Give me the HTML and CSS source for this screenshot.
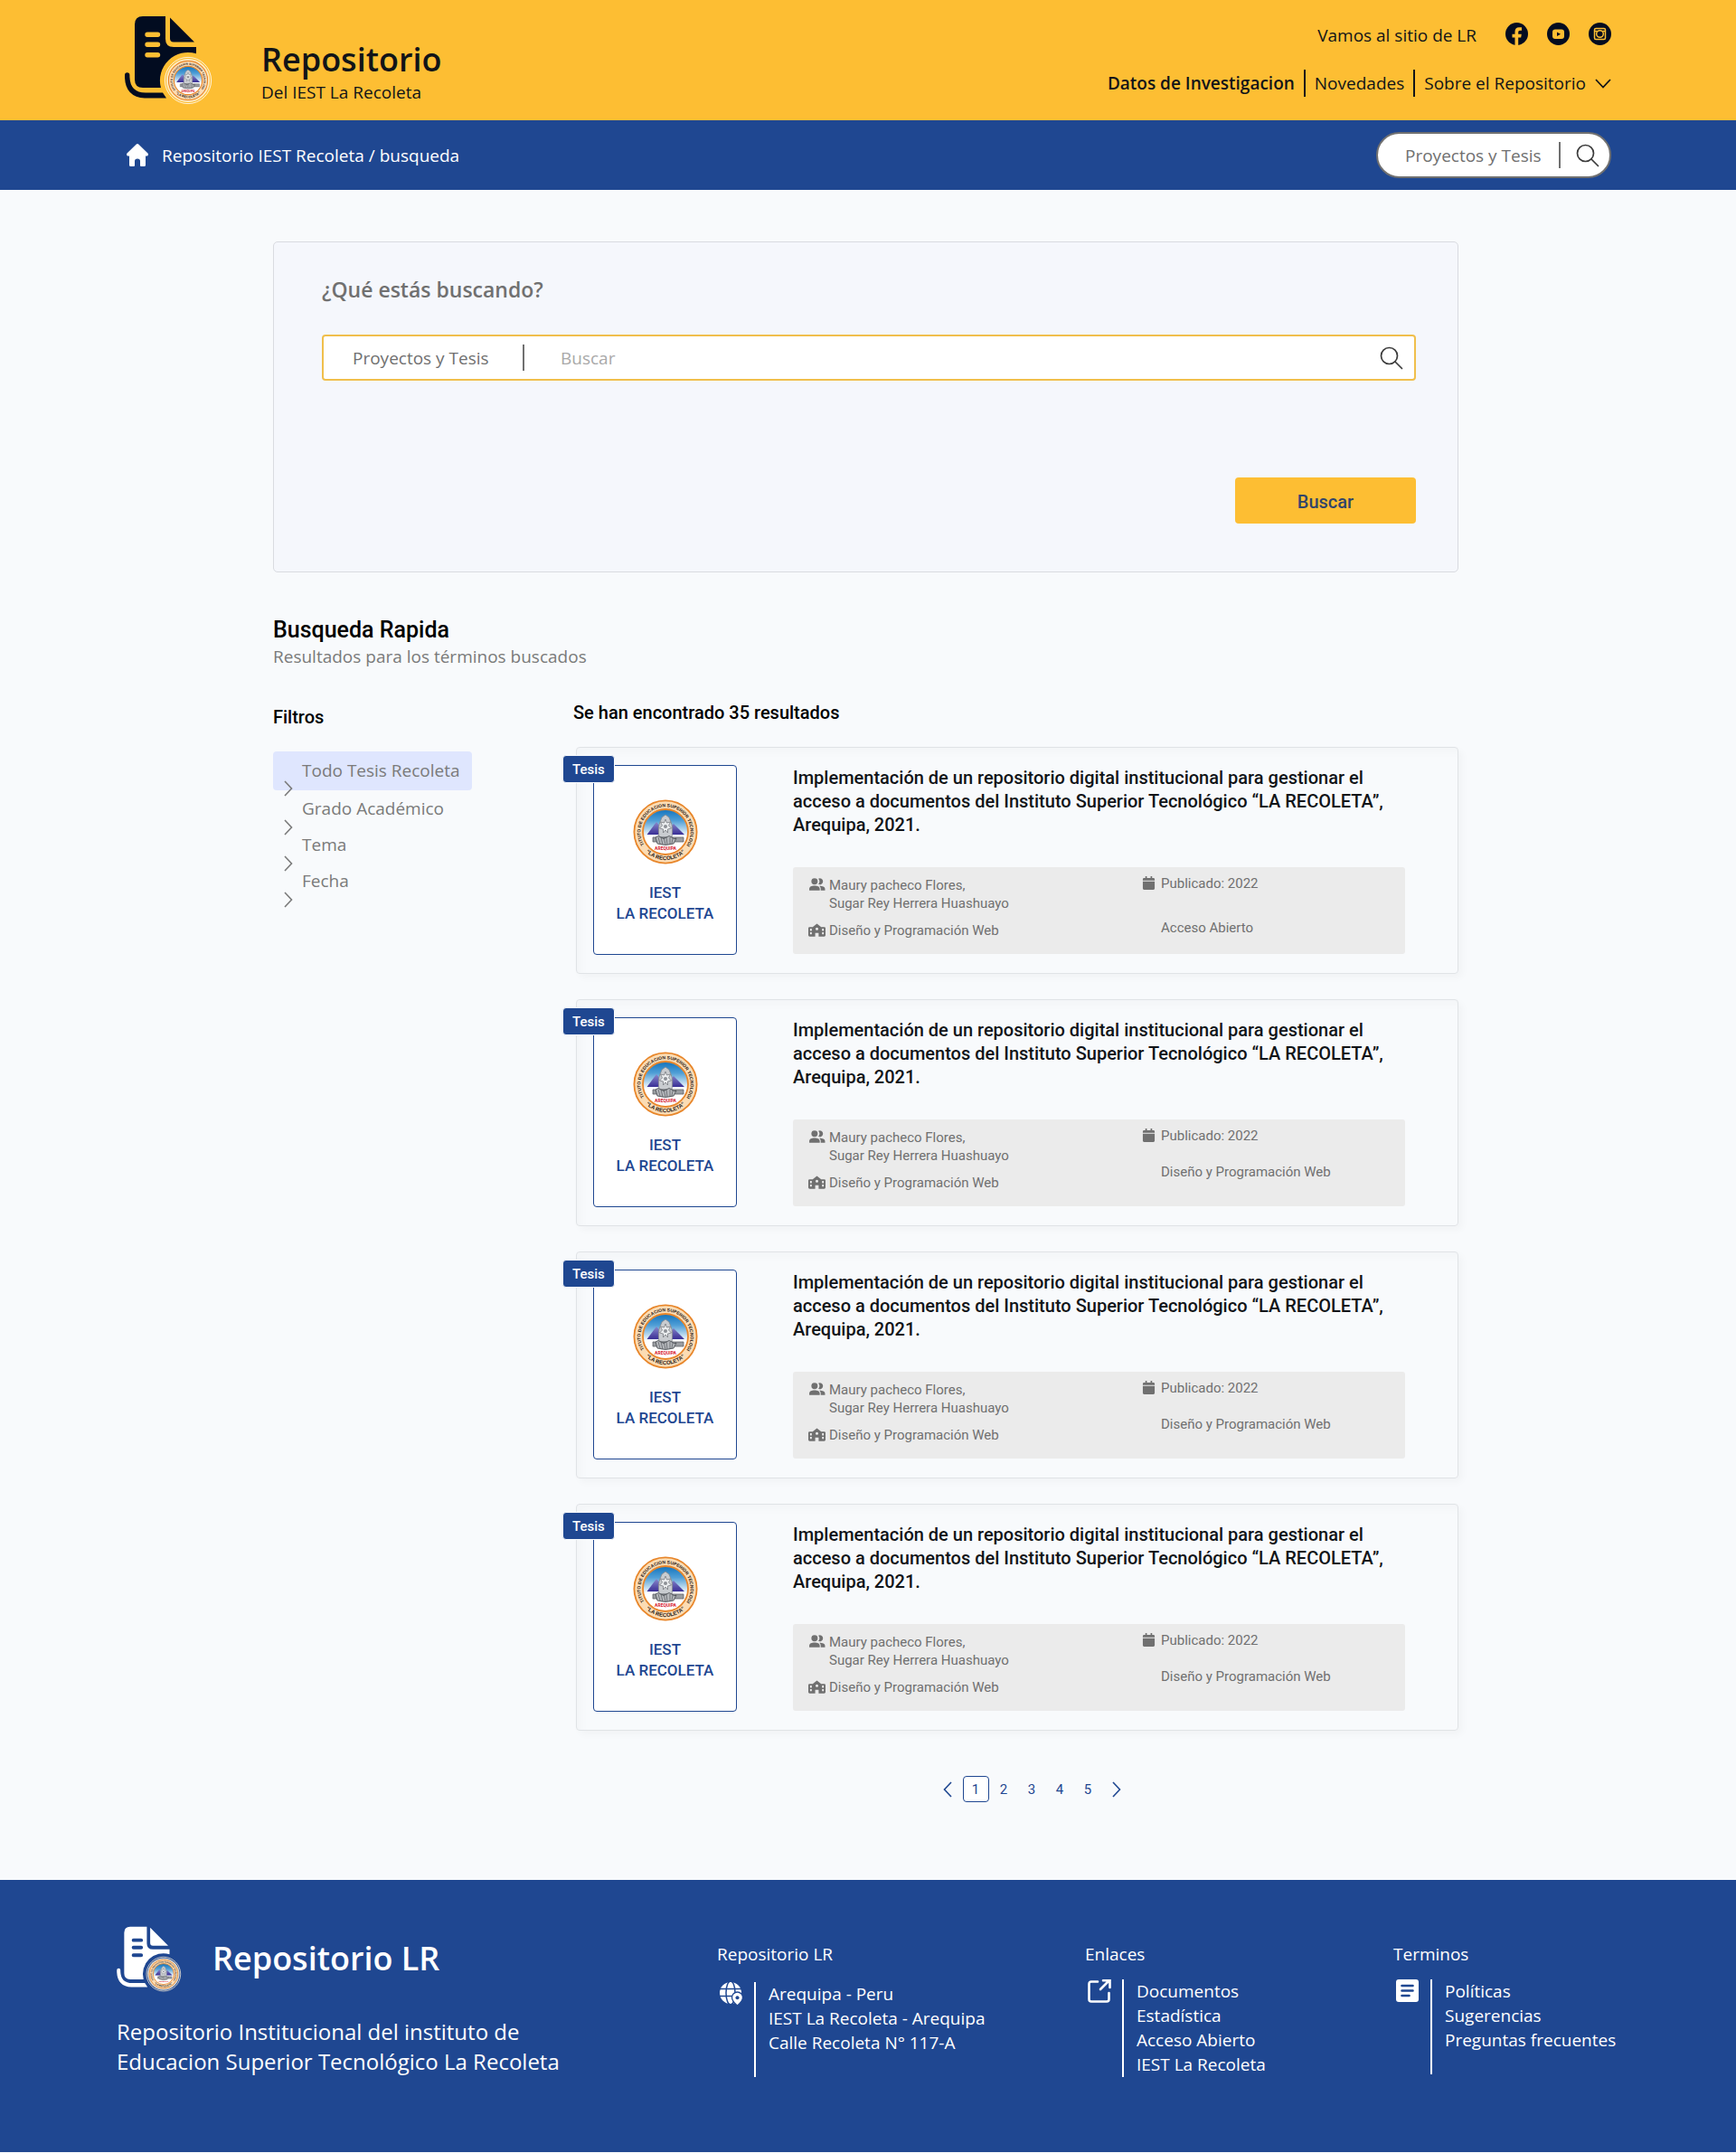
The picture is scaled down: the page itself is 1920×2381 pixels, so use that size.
FILE: index.html
```html
<!DOCTYPE html>
<html lang="es">
<head>
<meta charset="utf-8">
<meta name="viewport" content="width=device-width, initial-scale=1">
<title>Repositorio del IEST La Recoleta - búsqueda</title>
<link rel="stylesheet" href="styles.css">
</head>
<body>

<svg class="sprite" aria-hidden="true">
  <defs>
    <linearGradient id="sky" x1="0" y1="0" x2="0" y2="1">
      <stop offset="0" stop-color="#1273bd"/>
      <stop offset=".25" stop-color="#4f9ed6"/>
      <stop offset=".6" stop-color="#fff"/>
    </linearGradient>
    <linearGradient id="peak" x1="0" y1="0" x2="0" y2="1">
      <stop offset="0" stop-color="#8f8fd0"/>
      <stop offset="1" stop-color="#3a2f96"/>
    </linearGradient>
    <path id="arc-top" d="M13.2 51.5A27.6 27.6 0 1 1 58.8 51.5"/>
    <path id="arc-bottom" d="M13 57A31.4 31.4 0 0 0 59 57"/>
  </defs>
</svg>
<svg class="symbols" aria-hidden="true">
  <symbol id="seal" viewBox="0 0 72 72">
    <circle cx="36" cy="36" r="34.6" fill="#fbdcb4" stroke="#e8862a" stroke-width="1.8"/>
    <circle cx="36" cy="36" r="25" fill="url(#sky)" stroke="#e8862a" stroke-width="1.8"/>
    <path d="M15.500 39 26 25l5 6 5-7 5 7 4-4L57 39z" fill="url(#peak)"/>
    <path d="M29 42c-1-6-1-13 1-17l2-5 4-3 4 3 2 5c2 4 2 11 1 17z" fill="#c9ccd0" stroke="#83868b" stroke-width=".8"/>
    <path d="m36 22 1.500 4 4-1-2 4 3 3-4 1 0 4-2.500-3-2.500 3 0-4-4-1 3-3-2-4 4 1z" fill="#eceef0" stroke="#6d7076" stroke-width=".7"/>
    <circle cx="36" cy="30" r="2" fill="#8d9096"/>
    <path d="M22 42h34v5H22z" fill="#9a9da1" stroke="#55585d" stroke-width=".7"/>
    <path d="M25 42q3-3 6 0t6 0 6 0 5 1l-3 6q-9 3-18 0z" fill="#b5b8bc" stroke="#44474c" stroke-width=".8"/>
    <path d="m28 42 2 7m1-7 2 8m1-8 2 8m1-8 1 8m3-8 0 8m3-7-1 6" stroke="#55585d" stroke-width=".7" fill="none"/>
    <text x="36" y="56" class="seal-city">AREQUIPA</text>
    <text class="seal-ring"><textPath href="#arc-top" startOffset="50%">INSTITUTO DE EDUCACION SUPERIOR TECNOLOGICO</textPath></text>
    <text class="seal-ring seal-ring--name"><textPath href="#arc-bottom" startOffset="50%">“LA RECOLETA”</textPath></text>
  </symbol>
  <symbol id="logo" viewBox="0 0 97 99">
    <path fill="currentColor" fill-rule="evenodd" d="M20 1H45V26Q45 35 54 35H79V42.300A31 31 0 0 0 40 80H20Q11 80 11 71V10Q11 1 20 1ZM25 18.500a2.700 2.700 0 0 0 0 5.400H36.500a2.700 2.700 0 0 0 0-5.400ZM25 29.600a2.700 2.700 0 0 0 0 5.400H36.500a2.700 2.700 0 0 0 0-5.400ZM25 41a2.700 2.700 0 0 0 0 5.400H36.500a2.700 2.700 0 0 0 0-5.400Z"/>
    <path fill="currentColor" d="M50 2.500 77 29.500H54Q50 29.500 50 25.500ZM0 66a2.700 2.700 0 0 1 5.400 0V68Q6 85.500 23 85.500H42L46 91.500H22Q1 90.500 0 69Z"/>
    <circle cx="70" cy="72" r="25.600" fill="none" stroke="#fff3dc" stroke-width="1"/>
    <circle cx="70" cy="72" r="24" fill="#fff3dc" opacity=".85"/>
    <use href="#seal" x="47.500" y="49.500" width="45" height="45"/>
  </symbol>
  <symbol id="search" viewBox="0 0 26 26">
    <g fill="none" stroke="currentColor" stroke-width="1.700" stroke-linecap="round"><circle cx="10.500" cy="10.500" r="9"/><path d="m17 17 7.500 7.500"/></g>
  </symbol>
  <symbol id="next" viewBox="0 0 10 18">
    <path d="m1 1 7.500 8L1 17" fill="none" stroke="currentColor" stroke-width="1.600"/>
  </symbol>
  <symbol id="prev" viewBox="0 0 10 18">
    <path d="M9 1 1.500 9 9 17" fill="none" stroke="currentColor" stroke-width="1.600"/>
  </symbol>
  <symbol id="people" viewBox="0 0 18 14">
    <g fill="currentColor"><circle cx="6.500" cy="3.500" r="3.300"/><path d="M10.500.6a3.300 3.300 0 1 1 0 5.800 4.500 4.500 0 0 0 0-5.800ZM1 13v-1.500C1 9 3.500 8 6.500 8s5.500 1 5.500 3.500V13zM13 13v-1.500c0-1.400-.5-2.400-1.400-3.200C15 8.300 17.500 9.300 17.500 11.500V13z"/></g>
  </symbol>
  <symbol id="school" viewBox="0 0 20 15">
    <path fill="currentColor" fill-rule="evenodd" d="M5 4 10 0l5 4h3.500Q20 4 20 5.500V13.500Q20 15 18.500 15H12V11H8v4H1.500Q0 15 0 13.500V5.500Q0 4 1.500 4ZM2 6v2.500h2V6Zm0 4v2.500h2V10ZM16 6v2.500h2V6Zm0 4v2.500h2V10ZM10 4.500a1.600 1.600 0 1 0 0 3.200 1.600 1.600 0 0 0 0-3.200Z"/>
  </symbol>
  <symbol id="calendar" viewBox="0 0 14 16">
    <path fill="currentColor" d="M3 0h1.800v2h4.400V0H11v2h1.500Q14 2 14 3.500V5H0V3.500Q0 2 1.500 2H3ZM0 6h14v8.500q0 1.500-1.500 1.500h-11Q0 16 0 14.500Z"/>
  </symbol>
</svg>

<header>
  <div class="topbar">
    <div class="brand">
      <svg class="brand__logo" role="img" aria-label="Logo del Repositorio"><use href="#logo"/></svg>
      <div class="brand__text">
        <h1 class="brand__title">Repositorio</h1>
        <p class="brand__sub">Del IEST La Recoleta</p>
      </div>
    </div>
    <div class="topbar__links">
      <div class="social">
        <a href="#" class="social__site">Vamos al sitio de LR</a>
        <a href="#" aria-label="Facebook"><svg width="25" height="25" viewBox="0 0 25 25"><circle cx="12.500" cy="12.500" r="12.500" fill="currentColor"/><path d="M10.500 25V16.500H7.500V12.800H10.500V10Q10.500 5.300 15 5.300H18V8.700H16Q14.200 8.700 14.200 10.400V12.800H17.800L17.200 16.500H14.200V25Z" fill="#fdbe33"/></svg></a>
        <a href="#" aria-label="YouTube"><svg width="25" height="25" viewBox="0 0 25 25"><circle cx="12.500" cy="12.500" r="12.500" fill="currentColor"/><rect x="6" y="7.500" width="13" height="10.500" rx="3" fill="#fdbe33"/><path d="m11 10.400 4 2.300-4 2.300z" fill="currentColor"/></svg></a>
        <a href="#" aria-label="Instagram"><svg width="25" height="25" viewBox="0 0 25 25"><circle cx="12.500" cy="12.500" r="12.500" fill="currentColor"/><g fill="none" stroke="#fdbe33" stroke-width="1.500"><rect x="6.500" y="6.500" width="12" height="12" rx="1.500"/><circle cx="12.500" cy="12.500" r="3.800"/><path d="M6.500 9.500h3.200m5.600 0h3.200"/></g></svg></a>
      </div>
      <nav class="menu" aria-label="Principal">
        <a href="#" class="menu__item menu__item--active">Datos de Investigacion</a>
        <a href="#" class="menu__item">Novedades</a>
        <button type="button" class="menu__item">Sobre el Repositorio
          <svg width="18" height="11" viewBox="0 0 18 11"><path d="m1 1 8 8.500L17 1" fill="none" stroke="currentColor" stroke-width="1.700"/></svg>
        </button>
      </nav>
    </div>
  </div>

  <div class="subbar">
    <nav class="crumbs" aria-label="Ruta">
      <svg width="24" height="25" viewBox="0 0 24 25"><path fill="currentColor" d="M10.800.6q1.200-1 2.400 0L23.500 10.500Q24.500 12 23 13.500L21 13.500V23.500Q21 25 19.500 25H16Q15 25 15 24V19Q15 16.500 12 16.500T9 19V24Q9 25 8 25H4.500Q3 25 3 23.500V13.500L1 13.500Q-.5 12 .5 10.500Z"/></svg>
      <a href="#">Repositorio IEST Recoleta / busqueda</a>
    </nav>
    <form class="pill">
      <select class="plain-select pill__select" aria-label="Colección"><option>Proyectos y Tesis</option></select>
      <button type="button" class="icon-button" aria-label="Buscar"><svg width="26" height="26"><use href="#search"/></svg></button>
    </form>
  </div>
</header>

<main class="page">
  <form class="panel">
    <h2 class="panel__title"><label for="q">¿Qué estás buscando?</label></h2>
    <div class="searchbox">
      <select class="plain-select searchbox__select" aria-label="Tipo de documento"><option>Proyectos y Tesis</option></select>
      <input class="searchbox__input" id="q" type="text" placeholder="Buscar">
      <button type="button" class="icon-button" aria-label="Buscar"><svg width="26" height="26"><use href="#search"/></svg></button>
    </div>
    <button type="button" class="panel__submit">Buscar</button>
  </form>

  <h2 class="quick__title">Busqueda Rapida</h2>
  <p class="quick__sub">Resultados para los términos buscados</p>

  <div class="columns">
    <aside class="filters">
      <h3 class="small-title">Filtros</h3>
      <ul class="filters__list">
        <li><button type="button" class="filter filter--active"><svg class="filter__arrow"><use href="#next"/></svg>Todo Tesis Recoleta</button></li>
        <li><button type="button" class="filter"><svg class="filter__arrow"><use href="#next"/></svg>Grado Académico</button></li>
        <li><button type="button" class="filter"><svg class="filter__arrow"><use href="#next"/></svg>Tema</button></li>
        <li><button type="button" class="filter"><svg class="filter__arrow"><use href="#next"/></svg>Fecha</button></li>
      </ul>
    </aside>

    <section class="results">
      <h3 class="small-title">Se han encontrado 35 resultados</h3>
      <div class="results__list">
        <article class="card">
          <div class="cover">
            <span class="cover__badge">Tesis</span>
            <svg class="cover__seal"><use href="#seal"/></svg>
            <p class="cover__name">IEST<br>LA RECOLETA</p>
          </div>
          <div class="card__body">
            <h4 class="card__title">Implementación de un repositorio digital institucional para gestionar el acceso a documentos del Instituto Superior Tecnológico “LA RECOLETA”, Arequipa, 2021.</h4>
            <div class="meta">
              <div class="meta__col">
                <p class="meta__item"><svg class="meta__icon"><use href="#people"/></svg><span>Maury pacheco Flores,<br>Sugar Rey Herrera Huashuayo</span></p>
                <p class="meta__item"><svg class="meta__icon"><use href="#school"/></svg>Diseño y Programación Web</p>
              </div>
              <div class="meta__col meta__col--date meta__col--open">
                <p class="meta__item"><svg class="meta__icon"><use href="#calendar"/></svg>Publicado: 2022</p>
                <p class="meta__note">Acceso Abierto</p>
              </div>
            </div>
          </div>
        </article>

        <article class="card">
          <div class="cover">
            <span class="cover__badge">Tesis</span>
            <svg class="cover__seal"><use href="#seal"/></svg>
            <p class="cover__name">IEST<br>LA RECOLETA</p>
          </div>
          <div class="card__body">
            <h4 class="card__title">Implementación de un repositorio digital institucional para gestionar el acceso a documentos del Instituto Superior Tecnológico “LA RECOLETA”, Arequipa, 2021.</h4>
            <div class="meta">
              <div class="meta__col">
                <p class="meta__item"><svg class="meta__icon"><use href="#people"/></svg><span>Maury pacheco Flores,<br>Sugar Rey Herrera Huashuayo</span></p>
                <p class="meta__item"><svg class="meta__icon"><use href="#school"/></svg>Diseño y Programación Web</p>
              </div>
              <div class="meta__col meta__col--date">
                <p class="meta__item"><svg class="meta__icon"><use href="#calendar"/></svg>Publicado: 2022</p>
                <p class="meta__note">Diseño y Programación Web</p>
              </div>
            </div>
          </div>
        </article>

        <article class="card">
          <div class="cover">
            <span class="cover__badge">Tesis</span>
            <svg class="cover__seal"><use href="#seal"/></svg>
            <p class="cover__name">IEST<br>LA RECOLETA</p>
          </div>
          <div class="card__body">
            <h4 class="card__title">Implementación de un repositorio digital institucional para gestionar el acceso a documentos del Instituto Superior Tecnológico “LA RECOLETA”, Arequipa, 2021.</h4>
            <div class="meta">
              <div class="meta__col">
                <p class="meta__item"><svg class="meta__icon"><use href="#people"/></svg><span>Maury pacheco Flores,<br>Sugar Rey Herrera Huashuayo</span></p>
                <p class="meta__item"><svg class="meta__icon"><use href="#school"/></svg>Diseño y Programación Web</p>
              </div>
              <div class="meta__col meta__col--date">
                <p class="meta__item"><svg class="meta__icon"><use href="#calendar"/></svg>Publicado: 2022</p>
                <p class="meta__note">Diseño y Programación Web</p>
              </div>
            </div>
          </div>
        </article>

        <article class="card">
          <div class="cover">
            <span class="cover__badge">Tesis</span>
            <svg class="cover__seal"><use href="#seal"/></svg>
            <p class="cover__name">IEST<br>LA RECOLETA</p>
          </div>
          <div class="card__body">
            <h4 class="card__title">Implementación de un repositorio digital institucional para gestionar el acceso a documentos del Instituto Superior Tecnológico “LA RECOLETA”, Arequipa, 2021.</h4>
            <div class="meta">
              <div class="meta__col">
                <p class="meta__item"><svg class="meta__icon"><use href="#people"/></svg><span>Maury pacheco Flores,<br>Sugar Rey Herrera Huashuayo</span></p>
                <p class="meta__item"><svg class="meta__icon"><use href="#school"/></svg>Diseño y Programación Web</p>
              </div>
              <div class="meta__col meta__col--date">
                <p class="meta__item"><svg class="meta__icon"><use href="#calendar"/></svg>Publicado: 2022</p>
                <p class="meta__note">Diseño y Programación Web</p>
              </div>
            </div>
          </div>
        </article>
      </div>

      <nav class="pager" aria-label="Páginas">
        <a href="#" class="pager__arrow" aria-label="Anterior"><svg width="10" height="18"><use href="#prev"/></svg></a>
        <a href="#" class="pager__page pager__page--current" aria-current="page">1</a>
        <a href="#" class="pager__page">2</a>
        <a href="#" class="pager__page">3</a>
        <a href="#" class="pager__page">4</a>
        <a href="#" class="pager__page">5</a>
        <a href="#" class="pager__arrow" aria-label="Siguiente"><svg width="10" height="18"><use href="#next"/></svg></a>
      </nav>
    </section>
  </div>
</main>

<footer class="footer">
  <div class="about">
    <div class="about__brand">
      <svg class="about__logo" role="img" aria-label="Logo del Repositorio"><use href="#logo"/></svg>
      <h2 class="about__title">Repositorio LR</h2>
    </div>
    <p class="about__text">Repositorio Institucional del instituto de<br>Educacion Superior Tecnológico La Recoleta</p>
  </div>

  <section class="links links--contact">
    <h3 class="links__title">Repositorio LR</h3>
    <div class="links__body">
      <svg class="links__icon" viewBox="0 0 26 26"><circle cx="12" cy="12" r="12" fill="#fff"/><g fill="none" stroke="#1f4791" stroke-width="1.500"><path d="M0 7.500h24M0 15.500h24"/><ellipse cx="12" cy="12" rx="5" ry="13"/></g><path d="M19.500 11a6 6 0 0 1 6 6c0 4-6 9-6 9s-6-5-6-9a6 6 0 0 1 6-6z" fill="#fff" stroke="#1f4791" stroke-width="1.300"/><circle cx="19.500" cy="17.300" r="2" fill="#1f4791"/></svg>
      <ul class="links__list">
        <li>Arequipa - Peru</li>
        <li>IEST La Recoleta - Arequipa</li>
        <li>Calle Recoleta N° 117-A</li>
      </ul>
    </div>
  </section>

  <section class="links">
    <h3 class="links__title">Enlaces</h3>
    <div class="links__body">
      <svg class="links__icon" viewBox="0 0 26 26"><g fill="none" stroke="#fff" stroke-width="2.600" stroke-linecap="round"><path d="M11 2.500H4Q1.500 2.500 1.500 5V22Q1.500 24.500 4 24.500H21Q23.500 24.500 23.500 22V15"/><path d="M14 11 23 2M17 1.300H24.500V9"/></g></svg>
      <ul class="links__list">
        <li><a href="#">Documentos</a></li>
        <li><a href="#">Estadística</a></li>
        <li><a href="#">Acceso Abierto</a></li>
        <li><a href="#">IEST La Recoleta</a></li>
      </ul>
    </div>
  </section>

  <section class="links">
    <h3 class="links__title">Terminos</h3>
    <div class="links__body">
      <svg class="links__icon" viewBox="0 0 26 26"><rect width="25" height="25" rx="3" fill="#fff"/><path d="M6.500 7H18.500M6.500 12.500H18.500M6.500 18H14.500" stroke="#1f4791" stroke-width="2.600" stroke-linecap="round"/></svg>
      <ul class="links__list">
        <li><a href="#">Políticas</a></li>
        <li><a href="#">Sugerencias</a></li>
        <li><a href="#">Preguntas frecuentes</a></li>
      </ul>
    </div>
  </section>
</footer>

</body>
</html>
```

FILE: styles.css
```css
:root {
  --yellow: #fdbe33;
  --blue: #1f4791;
  --ink: #111418;
  --navy: #020c20;
  --gray: #707070;
  --bg: #f8fafc;
  --ui: "Open Sans", "Noto Sans", sans-serif;
  --body: Roboto, "Liberation Sans", sans-serif;
}

* { box-sizing: border-box; }

body {
  margin: 0;
  background: var(--bg);
  color: var(--ink);
  font: 19px/28px var(--ui);
}

h1, h2, h3, h4, p, ul { margin: 0; padding: 0; font-weight: 400; }
ul { list-style: none; }
a { color: inherit; text-decoration: none; }
button, input, select { font: inherit; color: inherit; margin: 0; padding: 0; border: 0; background: none; }
button { cursor: pointer; }
svg { display: block; flex: none; }

/* Gradients must stay rendered to be usable; symbols need not */
.sprite { position: absolute; width: 0; height: 0; }
.symbols { display: none; }
.seal-city { font: 700 5px var(--body); fill: #d8202c; text-anchor: middle; }
.seal-ring { font: 700 5px "Liberation Sans", sans-serif; fill: #2b2018; text-anchor: middle; }
.seal-ring--name { font-size: 6px; }

/* Header */
.topbar {
  display: flex;
  justify-content: space-between;
  padding: 17px 138px;
  background: var(--yellow);
}
.brand { display: flex; gap: 54px; }
.brand__logo { width: 97px; height: 99px; color: var(--navy); }
.brand__text { padding-top: 26px; }
.brand__title { font-size: 36px; line-height: 45px; font-weight: 600; }
.topbar__links {
  display: flex;
  flex-direction: column;
  align-items: flex-end;
  gap: 24px;
  padding-top: 8px;
}
.social { display: flex; gap: 21px; color: var(--navy); }
.social__site { margin-right: 11px; color: var(--ink); }
.menu { display: flex; }
.menu__item {
  display: flex;
  align-items: center;
  gap: 10px;
  padding: 0 10px;
  line-height: 30px;
}
.menu__item + .menu__item { border-left: 2px solid currentColor; }
.menu__item:last-child { padding-right: 0; }
.menu__item--active { font-weight: 600; }

.subbar {
  display: flex;
  justify-content: space-between;
  align-items: center;
  padding: 13px 138px;
  background: var(--blue);
}
.crumbs { display: flex; align-items: center; gap: 15px; padding-left: 2px; color: #fff; }
.plain-select { appearance: none; color: var(--gray); }
.pill {
  display: flex;
  align-items: center;
  gap: 17px;
  height: 51px;
  padding: 0 11px 0 30px;
  border: 2px solid var(--gray);
  border-radius: 26px;
  background: #fff;
}
.pill__select { height: 29px; padding-right: 19px; border-right: 2px solid var(--gray); }
.icon-button { color: #3c3c3c; }

/* Search panel */
.page { padding: 57px 307px 86px 302px; }
.panel {
  display: flex;
  flex-direction: column;
  padding: 35px 46px 53px 53px;
  border: 1px solid #d9dbe0;
  border-radius: 5px;
  background: #f5f7fc;
}
.panel__title { font-size: 23px; line-height: 34px; font-weight: 600; color: var(--gray); }
.panel__title label { font-weight: inherit; }
.searchbox {
  display: flex;
  align-items: center;
  height: 51px;
  margin-top: 33px;
  padding: 0 12px 0 32px;
  border: 2px solid #f0bf4c;
  border-radius: 4px;
  background: #fff;
}
.searchbox__select { height: 29px; padding-right: 37px; border-right: 2px solid var(--gray); }
.searchbox__input { flex: 1; min-width: 0; padding-left: 40px; outline: 0; }
.searchbox__input::placeholder { color: #a9a9a9; opacity: 1; }
.panel__submit {
  align-self: flex-end;
  width: 200px;
  height: 51px;
  margin-top: 107px;
  padding-top: 2px;
  border-radius: 4px;
  background: var(--yellow);
  color: #31456a;
  font: 500 20px/24px var(--body);
}

.quick__title { margin-top: 49px; font: 500 25px/30px var(--body); color: #000; }
.quick__sub { color: #7a7a7a; }

/* Filters and results */
.columns { display: grid; grid-template-columns: 332px minmax(0, 1fr); margin-top: 36px; }
.small-title { font: 500 20px/24px var(--body); color: #000; }
.filters { padding-top: 5px; }
.filters__list { width: 220px; margin-top: 26px; }
.filter {
  display: flex;
  gap: 10px;
  width: 100%;
  height: 40px;
  padding-left: 12px;
  line-height: 40px;
  color: #7a7a7a;
}
.filter--active { height: 43px; line-height: 43px; border-radius: 4px; background: #dfe6fe; }
.filter__arrow { width: 10px; height: 18px; margin-top: 32px; }

.results__list { display: grid; gap: 28px; padding-left: 3px; margin-top: 26px; }
.card {
  display: flex;
  gap: 62px;
  padding: 19px 58px 20px 18px;
  border: 1px solid #e0e3e6;
  border-radius: 4px;
  box-shadow: 4px 4px 8px rgba(0, 0, 0, .03), inset 6px 6px 8px rgba(0, 0, 0, .02);
}
.cover {
  position: relative;
  display: flex;
  flex: none;
  flex-direction: column;
  align-items: center;
  width: 159px;
  height: 210px;
  padding-top: 37px;
  border: 1px solid var(--blue);
  border-radius: 4px;
  background: #fff;
}
.cover__badge {
  position: absolute;
  top: -12px;
  left: -35px;
  padding: 2px 10px 1px;
  border: 1px solid var(--bg);
  border-radius: 4px;
  background: var(--blue);
  color: #fff;
  font: 500 15px/26px var(--body);
}
.cover__seal { width: 72px; height: 72px; }
.cover__name { margin-top: 20px; font: 500 17px/23px var(--body); color: var(--blue); text-align: center; }
.card__body { flex: 1; min-width: 0; padding-top: 1px; }
.card__title { font: 500 20px/26px var(--body); }
.meta {
  display: grid;
  grid-template-columns: 367px 1fr;
  height: 96px;
  margin-top: 34px;
  padding: 8px 17px;
  border-radius: 3px;
  background: #ebebeb;
  color: var(--gray);
  font: 400 15px/20px var(--body);
}
.meta__col { display: flex; flex-direction: column; gap: 10px; padding-top: 2px; }
.meta__item { display: flex; gap: 4px; }
.meta__icon { width: 19px; height: 15px; margin-top: 2px; }
.meta__col--date { gap: 20px; padding-top: 0; }
.meta__col--open { gap: 29px; }
.meta__note { padding-left: 23px; }

.pager {
  display: flex;
  justify-content: center;
  align-items: center;
  gap: 2px;
  margin-top: 50px;
  padding-left: 35px;
  color: var(--blue);
  font: 400 15px/31px var(--body);
}
.pager__page { width: 29px; height: 29px; text-align: center; }
.pager__page--current { border: 1px solid var(--blue); border-radius: 4px; background: #fff; line-height: 29px; }
.pager__arrow { padding: 0 10px; }

/* Footer */
.footer {
  display: grid;
  grid-template-columns: minmax(0, 664fr) minmax(0, 407fr) minmax(0, 341fr) minmax(0, 242fr);
  padding: 51px 137px 83px 129px;
  background: var(--blue);
  color: #fff;
}
.about__brand { display: flex; gap: 34px; }
.about__logo { width: 72px; height: 73px; }
.about__title { padding-top: 14px; font-size: 36px; line-height: 44px; font-weight: 600; }
.about__text { margin-top: 27px; font-size: 24px; line-height: 33px; }
.links { padding-top: 17px; }
.links__title { font-size: 19px; line-height: 28px; }
.links__body { display: flex; gap: 12px; margin-top: 14px; padding-left: 3px; }
.links--contact .links__body { margin-top: 17px; }
.links__icon { width: 26px; height: 26px; }
.links__list { min-height: 105px; padding-left: 14px; border-left: 2px solid #fff; line-height: 27px; white-space: nowrap; }
```
